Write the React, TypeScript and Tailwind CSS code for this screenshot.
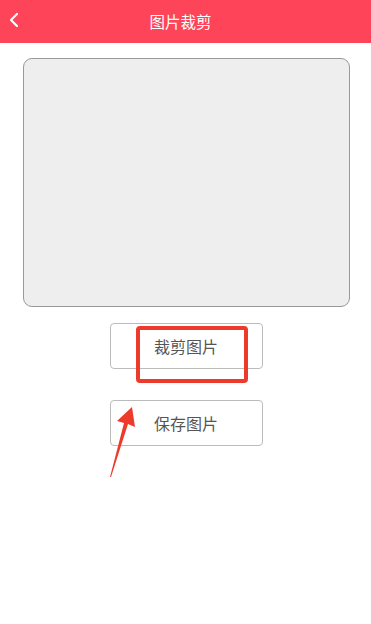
import React from "react";

export default function App() {
  return (
    <div
      className="relative min-h-[624px] w-[371px] bg-white"
      style={{ fontFamily: '"Noto Sans CJK SC", "Noto Sans", sans-serif' }}
    >
      <header className="relative flex h-[43px] items-center justify-center bg-[#fe4458] pr-[10px] text-[15.5px] text-white">
        <svg className="absolute left-[8px] top-[12px]" width="12" height="16" viewBox="0 0 12 16" fill="none">
          <path d="M9 2 L3 8 L9 14" stroke="white" strokeWidth="2.2" strokeLinecap="round" strokeLinejoin="round" />
        </svg>
        图片裁剪
      </header>
      <div className="flex flex-col items-center pl-[1px]">
        <div className="mt-[15px] h-[249px] w-[327px] rounded-[9px] border border-[#999] bg-[#eeeeee]" />
        <button className="mt-[16px] h-[46px] w-[153px] rounded-[4px] border border-[#bbb] bg-white text-[16px] text-[#555]">
          裁剪图片
        </button>
        <button className="mt-[31px] h-[46px] w-[153px] rounded-[4px] border border-[#bbb] bg-white text-[16px] text-[#555]">
          保存图片
        </button>
      </div>
      {/* annotation overlay */}
      <div className="absolute left-[136px] top-[326px] h-[57px] w-[112px] rounded-[4px] border-[4px] border-[#ee3a2a]" />
      <svg className="absolute left-0 top-0" width="371" height="624" viewBox="0 0 371 624" fill="none">
        <path d="M110 477 L124 423 L117 421 L132 407 L135 427 L128 424 L111 477 Z" fill="#ee3a2a" />
      </svg>
    </div>
  );
}
